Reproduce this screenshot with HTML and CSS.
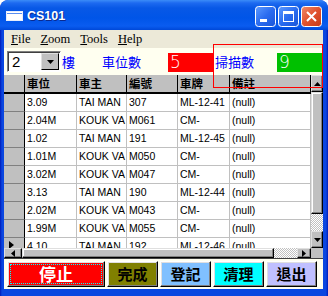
FILE: index.html
```html
<!DOCTYPE html>
<html>
<head>
<meta charset="utf-8">
<link rel="stylesheet" href="styles.css">
</head>
<body>
<div class="window">
  <div class="titlebar">
    <svg class="appicon" width="17" height="10" viewBox="0 0 17 10"><rect x="0.5" y="0.5" width="16" height="9" fill="#fff" stroke="#e8eefc"/><rect x="1" y="1" width="15" height="2" fill="#fff"/><line x1="1" y1="2.5" x2="16" y2="2.5" stroke="#5a8ef0"/></svg>
    <span class="title">CS101</span>
    <div class="tbtns">
      <svg class="tbtn" width="21" height="21" viewBox="0 0 21 21"><defs><linearGradient id="gb" x1="0" y1="0" x2="1" y2="1"><stop offset="0" stop-color="#5e9bff"/><stop offset="0.5" stop-color="#2a6cf0"/><stop offset="1" stop-color="#1a55d8"/></linearGradient></defs><rect x="0.5" y="0.5" width="20" height="20" rx="3" fill="url(#gb)" stroke="#fff"/><rect x="5" y="13" width="7" height="3" fill="#fff"/></svg>
      <svg class="tbtn" width="21" height="21" viewBox="0 0 21 21"><rect x="0.5" y="0.5" width="20" height="20" rx="3" fill="url(#gb)" stroke="#fff"/><rect x="5.5" y="5.5" width="10" height="10" fill="none" stroke="#fff"/><rect x="5" y="5" width="11" height="3" fill="#fff"/></svg>
      <svg class="tbtn" width="21" height="21" viewBox="0 0 21 21"><defs><linearGradient id="gr" x1="0" y1="0" x2="1" y2="1"><stop offset="0" stop-color="#f08a6a"/><stop offset="0.5" stop-color="#e0522e"/><stop offset="1" stop-color="#c83a18"/></linearGradient></defs><rect x="0.5" y="0.5" width="20" height="20" rx="3" fill="url(#gr)" stroke="#fff"/><path d="M6 6 L15 15 M15 6 L6 15" stroke="#fff" stroke-width="2"/></svg>
    </div>
  </div>
  <div class="client">
    <div class="menubar">
      <span class="mi"><u>F</u>ile</span>
      <span class="mi"><u>Z</u>oom</span>
      <span class="mi"><u>T</u>ools</span>
      <span class="mi"><u>H</u>elp</span>
    </div>
    <div class="toolbar">
      <div class="combo">
        <span class="combo-val">2</span>
        <span class="combo-btn"><svg width="7" height="4" viewBox="0 0 7 4"><polygon points="0,0 7,0 3.5,4" fill="#000"/></svg></span>
      </div>
      <span class="lbl lbl-floor">樓</span>
      <span class="lbl lbl-count">車位數</span>
      <span class="numbox red">5</span>
      <span class="lbl lbl-scan">掃描數</span>
      <span class="numbox green">9</span>
    </div>
    <div class="grid">
      <div class="viewport">
        <div class="row head">
          <div class="sel"></div><div class="c">車位</div><div class="c">車主</div><div class="c">編號</div><div class="c">車牌</div><div class="c">備註</div>
        </div>
        <div class="row"><div class="sel"></div><div class="c">3.09</div><div class="c">TAI MAN</div><div class="c">307</div><div class="c">ML-12-41</div><div class="c">(null)</div></div>
        <div class="row"><div class="sel"></div><div class="c">2.04M</div><div class="c">KOUK VA</div><div class="c">M061</div><div class="c">CM-</div><div class="c">(null)</div></div>
        <div class="row"><div class="sel"></div><div class="c">1.02</div><div class="c">TAI MAN</div><div class="c">191</div><div class="c">ML-12-45</div><div class="c">(null)</div></div>
        <div class="row"><div class="sel"></div><div class="c">1.01M</div><div class="c">KOUK VA</div><div class="c">M050</div><div class="c">CM-</div><div class="c">(null)</div></div>
        <div class="row"><div class="sel"></div><div class="c">3.02M</div><div class="c">KOUK VA</div><div class="c">M047</div><div class="c">CM-</div><div class="c">(null)</div></div>
        <div class="row"><div class="sel"></div><div class="c">3.13</div><div class="c">TAI MAN</div><div class="c">190</div><div class="c">ML-12-44</div><div class="c">(null)</div></div>
        <div class="row"><div class="sel"></div><div class="c">2.02M</div><div class="c">KOUK VA</div><div class="c">M043</div><div class="c">CM-</div><div class="c">(null)</div></div>
        <div class="row"><div class="sel"></div><div class="c">1.99M</div><div class="c">KOUK VA</div><div class="c">M055</div><div class="c">CM-</div><div class="c">(null)</div></div>
        <div class="row"><div class="sel cur"><svg width="5" height="8" viewBox="0 0 5 8"><polygon points="0,0 5,4 0,8" fill="#000"/></svg></div><div class="c">4.10</div><div class="c">TAI MAN</div><div class="c">192</div><div class="c">ML-12-46</div><div class="c">(null)</div></div>
      </div>
      <div class="vscroll">
        <div class="sb-btn v"><svg width="7" height="4" viewBox="0 0 7 4"><polygon points="0,4 7,4 3.5,0" fill="#000"/></svg></div>
        <div class="sb-thumb vthumb"></div>
        <div class="sb-track"></div>
        <div class="sb-btn v"><svg width="7" height="4" viewBox="0 0 7 4"><polygon points="0,0 7,0 3.5,4" fill="#000"/></svg></div>
      </div>
      <div class="hscroll">
        <div class="sb-btn hl"><svg width="4" height="7" viewBox="0 0 4 7"><polygon points="4,0 4,7 0,3.5" fill="#000"/></svg></div>
        <div class="sb-thumb hthumb"></div>
        <div class="sb-track"></div>
        <div class="sb-btn hr"><svg width="4" height="7" viewBox="0 0 4 7"><polygon points="0,0 0,7 4,3.5" fill="#000"/></svg></div>
      </div>
      <div class="corner"></div>
    </div>
    <div class="buttons">
      <button class="btn stop">停止</button>
      <button class="btn done">完成</button>
      <button class="btn reg">登記</button>
      <button class="btn clear">清理</button>
      <button class="btn exit">退出</button>
    </div>
    <div class="redframe"></div>
  </div>
</div>
</body>
</html>
```

FILE: styles.css
```css
html, body {
  margin: 0;
  padding: 0;
  background: #ffffff;
}
.window {
  width: 328px;
  height: 296px;
  box-sizing: border-box;
  background: linear-gradient(90deg, #0019b8 0px, #0a46e0 2px, #0a46e0 326px, #0019b8 328px);
  border-radius: 8px 8px 0 0;
  display: flex;
  flex-direction: column;
  overflow: hidden;
}
.titlebar {
  height: 30px;
  flex: none;
  display: flex;
  align-items: center;
  background: linear-gradient(180deg, #3b8cf8 0px, #1d6af0 3px, #0858e6 8px, #0055e8 18px, #0a5cf0 26px, #0048d8 30px);
  border-radius: 8px 8px 0 0;
}
.appicon {
  margin-left: 6px;
  margin-top: 2px;
}
.title {
  margin-left: 4px;
  font-family: "Liberation Sans", Arial, sans-serif;
  font-weight: bold;
  font-size: 12.5px;
  color: #ffffff;
  text-shadow: 1px 1px 0 #0a2a90;
  margin-top: 2px;
}
.tbtns {
  margin-left: auto;
  margin-right: 6px;
  display: flex;
  gap: 2px;
  margin-top: 3px;
}
.tbtn { display: block; }
.client {
  flex: 1;
  margin: 0 5px 7px 4px;
  background: #fffff0;
  display: flex;
  flex-direction: column;
  position: relative;
}
.menubar {
  height: 18px;
  flex: none;
  background: #ece9d8;
  display: flex;
  align-items: center;
  padding-left: 2px;
  font-family: "Liberation Serif", "Times New Roman", serif;
  font-size: 12.5px;
  color: #000;
}
.mi { padding: 0 5px; line-height: 18px; }
.toolbar {
  height: 27px;
  flex: none;
  display: flex;
  align-items: center;
  padding-left: 3px;
  font-family: "Noto Sans CJK TC", "Noto Sans CJK SC", sans-serif;
}
.combo {
  width: 54px;
  height: 21px;
  box-sizing: border-box;
  background: #fff;
  border: 1px solid;
  border-color: #808080 #ffffff #ffffff #808080;
  box-shadow: inset 1px 1px 0 #404040;
  display: flex;
  align-items: stretch;
  padding: 1px 1px 1px 2px;
}
.combo-val {
  flex: 1;
  font-family: "Liberation Sans", Arial, sans-serif;
  font-size: 15px;
  line-height: 17px;
  padding-left: 2px;
}
.combo-btn {
  width: 18px;
  box-sizing: border-box;
  background: #c0c0c0;
  border: 1px solid;
  border-color: #dfdfdf #000000 #000000 #dfdfdf;
  display: flex;
  align-items: center;
  justify-content: center;
}
.lbl {
  color: #0000ff;
  font-size: 13px;
  line-height: 19px;
}
.lbl-floor { margin-left: 1px; }
.lbl-count { margin-left: 27px; }
.lbl-scan { margin-left: 2px; }
.numbox {
  width: 45px;
  height: 19px;
  margin-top: 2px;
  color: #fff;
  font-family: "DejaVu Sans", sans-serif;
  font-weight: 300;
  font-size: 17px;
  line-height: 19px;
  padding-left: 2px;
  box-sizing: border-box;
}
.red { background: #ff0000; margin-left: 27px; }
.green { background: #00c000; margin-left: 23px; }
.grid {
  height: 184px;
  flex: none;
  box-sizing: border-box;
  border-bottom: 1px solid #404040;
  display: grid;
  grid-template-columns: 307px 12px;
  grid-template-rows: 173px 10px;
  background: #fff;
}
.viewport {
  overflow: hidden;
  background: #fff;
}
.row {
  display: grid;
  grid-template-columns: 21px 52px 50px 51px 52px 81px;
  height: 18px;
  font-family: "Liberation Sans", Arial, sans-serif;
  font-size: 10.5px;
  color: #000;
}
.row .c {
  box-sizing: border-box;
  border-right: 1px solid #c0c0c0;
  border-bottom: 1px solid #c0c0c0;
  line-height: 17px;
  padding-left: 2px;
  white-space: nowrap;
  overflow: hidden;
}
.row .sel {
  box-sizing: border-box;
  background: #c0c0c0;
  border-right: 1px solid #000;
  border-bottom: 1px solid #808080;
  display: flex;
  align-items: center;
  padding-left: 5px;
}
.row .sel.cur { align-items: flex-start; padding-top: 3px; }
.row.head {
  height: 19px;
  background: #c0c0c0;
  font-family: "Noto Sans CJK TC", "Noto Sans CJK SC", sans-serif;
  font-weight: bold;
  font-size: 11.5px;
}
.row.head .c {
  border-right: 1px solid #000;
  border-bottom: 2px solid #000;
  line-height: 17px;
}
.row.head .sel { border-bottom: 2px solid #000; }
.vscroll {
  display: flex;
  flex-direction: column;
  background: #c0c0c0;
}
.sb-btn {
  box-sizing: border-box;
  background: #c0c0c0;
  border: 1px solid;
  border-color: #dfdfdf #000000 #000000 #dfdfdf;
  box-shadow: inset -1px -1px 0 #808080;
  display: flex;
  align-items: center;
  justify-content: center;
  flex: none;
}
.sb-btn.v { height: 17px; }
.sb-thumb {
  box-sizing: border-box;
  background: #c0c0c0;
  border: 1px solid;
  border-color: #dfdfdf #000000 #000000 #dfdfdf;
  box-shadow: inset -1px -1px 0 #808080, inset 1px 1px 0 #ffffff;
  flex: none;
}
.vthumb { height: 122px; }
.sb-track {
  flex: 1;
  background: repeating-conic-gradient(#ffffff 0 25%, #c0c0c0 0 50%) 0 0 / 2px 2px;
}
.hscroll {
  display: flex;
  background: #c0c0c0;
}
.sb-btn.hl { width: 18px; }
.sb-btn.hr { width: 14px; }
.hthumb { width: 252px; }
.corner { background: #c0c0c0; }
.buttons {
  flex: 1;
  display: flex;
  gap: 2px;
  padding: 2px 0 0 3px;
}
.btn {
  width: 51px;
  height: 26px;
  box-sizing: border-box;
  margin: 0;
  padding: 0;
  border: 1px solid;
  border-color: #ffffff #000000 #000000 #ffffff;
  box-shadow: inset -1px -1px 0 #808080, inset 1px 1px 0 #dfdfdf;
  font-family: "Noto Sans CJK TC", "Noto Sans CJK SC", sans-serif;
  font-weight: bold;
  font-size: 15px;
  line-height: 22px;
  color: #000;
}
.stop {
  width: 98px;
  background: #ff0000;
  color: #fff;
  font-size: 17px;
  outline: 1px dotted #00ffff;
  outline-offset: -4px;
}
.done { background: #808000; }
.reg { background: #80c0ff; }
.clear { background: #00ffff; }
.exit { background: #c0c0ff; }
.redframe {
  position: absolute;
  left: 209px;
  top: 14px;
  width: 110px;
  height: 44px;
  box-sizing: border-box;
  border: 1px solid #ff0000;
  pointer-events: none;
}
```
